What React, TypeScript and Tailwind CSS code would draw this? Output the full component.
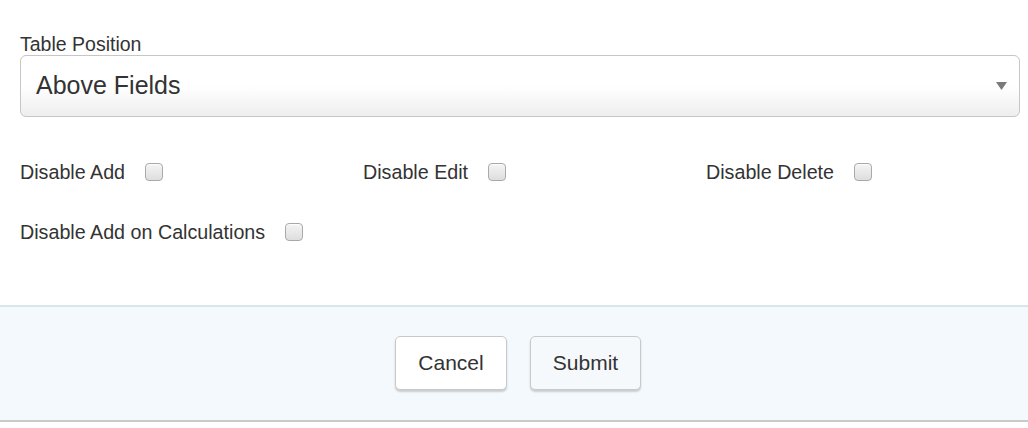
import React from "react";

function Check({ label }: { label: string }) {
  return (
    <label className="flex items-center h-[30px] text-[19.7px] leading-[30px] text-[#333]">
      <span>{label}</span>
      <span className="ml-[20px] inline-block w-[18px] h-[18px] rounded-[4px] border border-[#a9a9a9] bg-gradient-to-b from-[#f4f4f4] to-[#dedede] shadow-[inset_0_1px_1px_rgba(255,255,255,0.8)]" />
    </label>
  );
}

export default function App() {
  return (
    <div
      className="w-[1028px] h-[428px] bg-white overflow-hidden"
      style={{ fontFamily: '"Liberation Sans", Arial, sans-serif' }}
    >
      <div className="px-5 pt-[33px]">
        <div className="text-[19.5px] leading-[22px] text-[#333]">Table Position</div>
        <div className="mt-0 h-[62px] w-[1000px] rounded-[6px] border border-[#c6c6c6] bg-gradient-to-b from-white via-white to-[#eeeeee] flex items-center justify-between pl-[15px] pr-[12px]">
          <span className="text-[25px] text-[#333]">Above Fields</span>
          <svg width="11" height="10" viewBox="0 0 11 10">
            <path d="M0 1 L11 1 L5.5 9 Z" fill="#7a7a7a" />
          </svg>
        </div>
        <div className="mt-[40px] grid grid-cols-[343px_343px_1fr] gap-y-[30px]">
          <Check label="Disable Add" />
          <Check label="Disable Edit" />
          <Check label="Disable Delete" />
          <Check label="Disable Add on Calculations" />
        </div>
      </div>
      <div className="mt-[58px] border-t-2 border-b-2 border-t-[#d8e6ec] border-b-[#cacaca] bg-[#f4f9fd] pt-[29px] pb-[30px] pl-[8px] flex justify-center gap-[23px]">
        <button className="w-[112px] h-[54px] rounded-[5px] border border-[#c9c9c9] bg-white text-[21px] text-[#333] shadow-[0_2px_2px_rgba(0,0,0,0.18)]">
          Cancel
        </button>
        <button className="w-[111px] h-[54px] rounded-[5px] border border-[#c9c9c9] bg-[#f6f9fc] text-[21px] text-[#333] shadow-[0_2px_2px_rgba(0,0,0,0.18)]">
          Submit
        </button>
      </div>
    </div>
  );
}
